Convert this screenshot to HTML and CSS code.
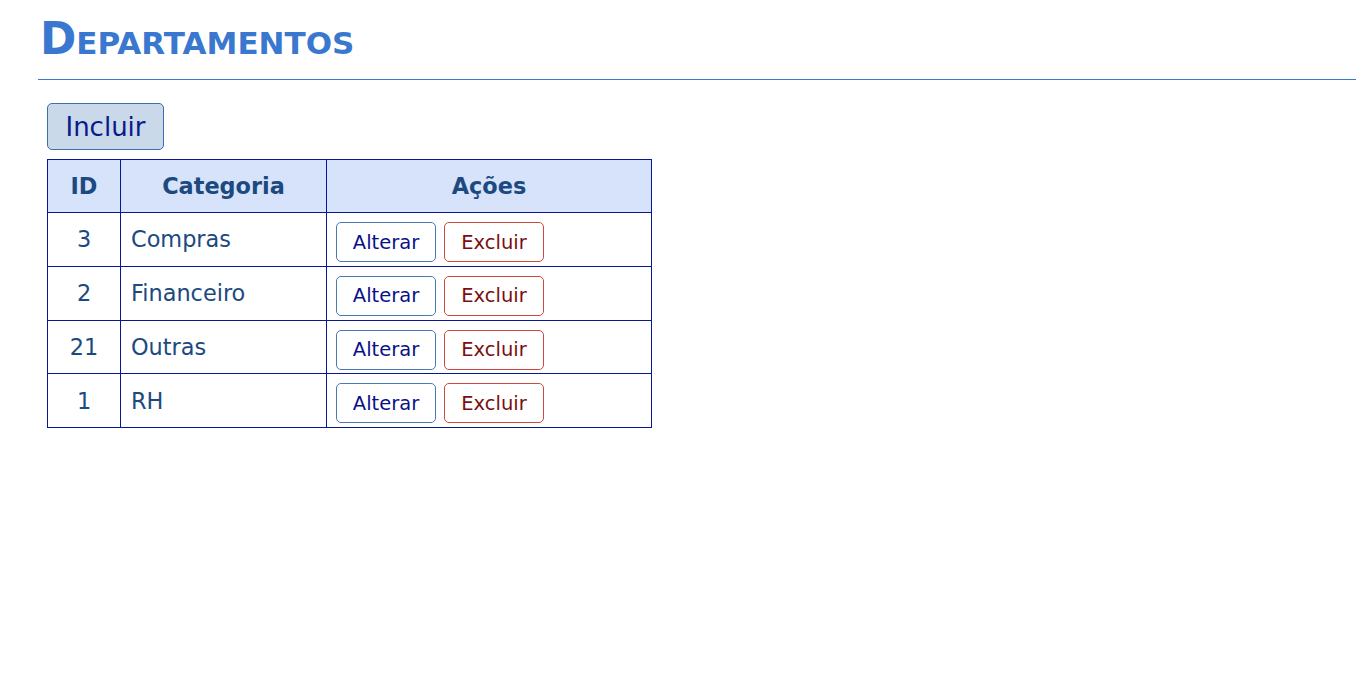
FILE: index.html
```html
<!DOCTYPE html>
<html lang="pt-BR">
<head>
<meta charset="utf-8">
<title>Departamentos</title>
<link rel="stylesheet" href="styles.css">
</head>
<body>
<h1 class="title">Departamentos</h1>
<div class="content">
  <button class="btn-incluir">Incluir</button>
  <table class="grid">
    <thead>
      <tr><th class="col-id">ID</th><th class="col-cat">Categoria</th><th class="col-acoes">Ações</th></tr>
    </thead>
    <tbody>
      <tr><td class="c-id">3</td><td class="c-cat">Compras</td><td class="c-acoes"><button class="btn btn-alt">Alterar</button><button class="btn btn-exc">Excluir</button></td></tr>
      <tr><td class="c-id">2</td><td class="c-cat">Financeiro</td><td class="c-acoes"><button class="btn btn-alt">Alterar</button><button class="btn btn-exc">Excluir</button></td></tr>
      <tr><td class="c-id">21</td><td class="c-cat">Outras</td><td class="c-acoes"><button class="btn btn-alt">Alterar</button><button class="btn btn-exc">Excluir</button></td></tr>
      <tr><td class="c-id">1</td><td class="c-cat">RH</td><td class="c-acoes"><button class="btn btn-alt">Alterar</button><button class="btn btn-exc">Excluir</button></td></tr>
    </tbody>
  </table>
</div>
</body>
</html>
```
FILE: styles.css
```css
html, body {
  margin: 0;
  padding: 0;
  background: #fff;
}
body {
  font-family: "DejaVu Sans", Verdana, sans-serif;
  padding: 0 0 0 38px;
}
.title {
  margin: 0;
  padding: 15px 0 0 2px;
  height: 64px;
  font-size: 43.75px;
  line-height: 48px;
  font-weight: bold;
  font-variant: small-caps;
  color: #3a78cf;
  border-bottom: 1px solid #3a78cf;
}
.content {
  padding: 23px 0 0 9px;
}
.btn-incluir {
  display: block;
  width: 117px;
  height: 47px;
  margin: 0 0 9px 0;
  padding: 0;
  font-family: "DejaVu Sans", Verdana, sans-serif;
  font-size: 26px;
  color: #0a1a8a;
  background: #c9d9ea;
  border: 1px solid #3f6da5;
  border-radius: 5px;
}
.grid {
  border-collapse: collapse;
  border: 1px solid #0a1890;
  color: #1c4a80;
  font-size: 22.4px;
}
.grid th, .grid td {
  border: 1px solid #0a1890;
  padding: 0;
}
.grid th {
  background: #d6e3fa;
  font-weight: bold;
  height: 52px;
}
.grid td {
  height: 52.75px;
}
.col-id { width: 72px; }
.col-cat { width: 205px; }
.col-acoes { width: 324px; }
.c-id { text-align: center; }
.c-cat { padding-left: 10px !important; }
.grid td.c-acoes {
  padding: 9px 0 0 9px;
  vertical-align: top;
  height: 43.75px;
}
.btn {
  width: 100px;
  height: 40px;
  padding: 0;
  margin: 0 8px 0 0;
  vertical-align: top;
  font-family: "DejaVu Sans", Verdana, sans-serif;
  font-size: 19.5px;
  background: #fff;
  border-radius: 5px;
}
.btn-alt {
  color: #0a1088;
  border: 1px solid #4a7ab3;
}
.btn-exc {
  color: #7a0f0f;
  border: 1px solid #cc4a40;
}
```
